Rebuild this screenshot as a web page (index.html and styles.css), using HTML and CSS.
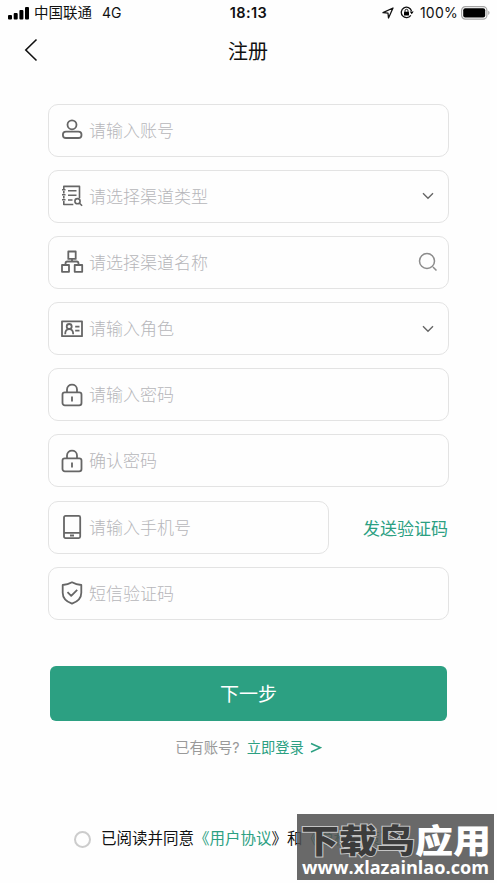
FILE: index.html
```html
<!DOCTYPE html>
<html lang="zh-CN">
<head>
<meta charset="utf-8">
<title>注册</title>
<link rel="stylesheet" href="styles.css">
</head>
<body>
<div class="status">
  <div class="status-left">
    <svg class="signal" width="22" height="14" viewBox="0 0 22 14"><rect x="0" y="9" width="4" height="4.500" rx="1"/><rect x="5.700" y="7" width="4" height="6.500" rx="1"/><rect x="11.400" y="4" width="4" height="9.500" rx="1"/><rect x="17" y="1" width="4" height="12.500" rx="1"/></svg>
    <span class="carrier">中国联通</span><span class="net">4G</span>
  </div>
  <div class="time">18:13</div>
  <div class="status-right">
    <svg width="12" height="12" viewBox="0 0 12 12"><path d="M1 5.700 11 1 6.500 11 6 6.200Z" fill="none" stroke="#111" stroke-width="1.300" stroke-linejoin="round"/></svg>
    <svg class="rot" width="14" height="13" viewBox="0 0 14 13"><path d="M11.500 5A5.200 5.200 0 1 0 10.800 9.300" fill="none" stroke="#111" stroke-width="1.300"/><path d="M9.700 5.500h4l-2 2.700z"/><rect x="4" y="5.800" width="5" height="3.700" rx=".6"/><path d="M5 6V4.800a1.500 1.500 0 0 1 3 0V6" fill="none" stroke="#111"/></svg>
    <span class="pct">100%</span>
    <svg class="battery" width="29" height="14" viewBox="0 0 29 14"><rect x=".6" y=".6" width="25.300" height="12.500" rx="3.800" fill="#fff" stroke="#a5a5a5" stroke-width="1.200"/><rect x="2.200" y="2.200" width="22" height="9.300" rx="2"/><path d="M27.300 4.800c1.600.7 1.600 3.500 0 4.200z" fill="#999"/></svg>
  </div>
</div>
<header class="nav">
  <svg class="back" width="14" height="24" viewBox="0 0 14 24"><path d="M12.500 1.500 1.800 12 12.500 22.500"/></svg>
  <h1>注册</h1>
</header>
<main class="form">
  <div class="field">
    <svg class="icon" viewBox="0 0 24 24"><circle cx="12" cy="6.800" r="4.500"/><rect x="2.900" y="13.700" width="18.600" height="6.300" rx="3.100"/></svg>
    <span class="hint">请输入账号</span>
  </div>
  <div class="field">
    <svg class="icon fine" viewBox="0 0 24 24"><path d="M3.800 5V2.400h15.700V14M3.800 7v2.500M3.800 12v2.500M3.800 17v3.500h9.500M2 5.700h3.500M2 10.700h3.500M2 15.700h3.500M8 6.800h8.500M8 11.300h8.500M8 16h4.500"/><circle cx="17.500" cy="17.200" r="2.600"/><path d="m19.500 19.200 2.600 2.600"/></svg>
    <span class="hint">请选择渠道类型</span>
    <svg class="arrow" viewBox="0 0 12 8"><path d="m1 1.200 5 5 5-5"/></svg>
  </div>
  <div class="field">
    <svg class="icon" viewBox="0 0 24 24"><path d="M8.300 1.500h7.400v7.400H8.300zM2 15h7v6.800H2zM14.700 15h7.500v6.800h-7.500zM12 9v2.500M5.500 15v-1.500q0-2 2-2h9q2 0 2 2V15"/></svg>
    <span class="hint">请选择渠道名称</span>
    <svg class="search" viewBox="0 0 20 20"><circle cx="9" cy="9" r="7.500"/><path d="m15 15 3.500 3.500"/></svg>
  </div>
  <div class="field">
    <svg class="icon" viewBox="0 0 24 24"><path d="M2 4.300h20v14.900H2zM15.200 9.600h4.300M15.200 13.600h4.300"/><circle cx="9.200" cy="9.500" r="2.500"/><path d="M5.200 17.300c0-6.800 8-6.800 8 0"/></svg>
    <span class="hint">请输入角色</span>
    <svg class="arrow" viewBox="0 0 12 8"><path d="m1 1.200 5 5 5-5"/></svg>
  </div>
  <div class="field">
    <svg class="icon" viewBox="0 0 24 24"><rect x="2.500" y="9.300" width="19" height="13" rx="2.300"/><path d="M7 9V6.500c0-6.500 10-6.500 10 0V9M12 13.500v5"/></svg>
    <span class="hint">请输入密码</span>
  </div>
  <div class="field">
    <svg class="icon" viewBox="0 0 24 24"><rect x="2.500" y="9.300" width="19" height="13" rx="2.300"/><path d="M7 9V6.500c0-6.500 10-6.500 10 0V9M12 13.500v5"/></svg>
    <span class="hint">确认密码</span>
  </div>
  <div class="row">
    <div class="field phone">
      <svg class="icon" viewBox="0 0 24 24"><rect x="4" y=".9" width="16.200" height="22.200" rx="1.500"/><path d="M4 17.800h16.200M10 20.500h4"/></svg>
      <span class="hint">请输入手机号</span>
    </div>
    <a class="send">发送验证码</a>
  </div>
  <div class="field">
    <svg class="icon" viewBox="0 0 24 24"><path d="M12 1.300C9 3.100 6 3.900 2.700 4V11.700c0 5.500 4 9 9.300 11 5.300-2 9.300-5.500 9.300-11V4C18 3.900 15 3.100 12 1.300ZM7.500 11.200l3.700 3.700 6-6"/></svg>
    <span class="hint">短信验证码</span>
  </div>
  <div class="next">下一步</div>
  <p class="login">已有账号?<a>立即登录</a><svg width="12" height="12" viewBox="0 0 12 12"><path d="m1 1.500 9.500 4.200L1 10"/></svg></p>
</main>
<footer class="agree"><i class="radio"></i><span>已阅读并同意<a>《用户协议</a>》和<a>《隐私政策》</a></span></footer>
<svg class="mark" width="197" height="66" viewBox="0 0 197 66">
  <rect width="197" height="66" fill="#505050" fill-opacity=".86"/>
  <text class="brand dark" x="4" y="38.500" textLength="114" lengthAdjust="spacingAndGlyphs">下载鸟</text>
  <text class="brand" x="118" y="38.500" textLength="76" lengthAdjust="spacingAndGlyphs">应用</text>
  <text class="url" x="5" y="60" textLength="187" lengthAdjust="spacingAndGlyphs">www.xlazainlao.com</text>
</svg>
</body>
</html>
```
FILE: styles.css
```css
* { box-sizing: border-box; }
body {
  margin: 0;
  width: 497px;
  height: 883px;
  overflow: hidden;
  position: relative;
  background: #fefefe;
  color: #111;
  font-family: Inter, "Noto Sans CJK SC", sans-serif;
}
.status {
  height: 25px;
  padding: 0 7px 0 8px;
  display: grid;
  grid-template-columns: 1fr auto 1fr;
  align-items: center;
  font-size: 14px;
  line-height: 25px;
}
.status-left, .status-right { display: flex; align-items: center; }
.status-right { justify-content: flex-end; }
.signal { margin-right: 4px; }
.carrier { font-size: 14.500px; }
.net { margin-left: 10px; }
.time { font-weight: 600; font-size: 14.500px; letter-spacing: .4px; margin-right: 1px; }
.rot { margin: 0 6px 0 6px; }
.pct { letter-spacing: .25px; }
.battery { margin-left: 3px; }
.nav {
  height: 50px;
  padding: 0 24px;
  display: grid;
  grid-template-columns: 14px 1fr 14px;
  align-items: center;
}
.nav h1 {
  margin: 0 1px 0 0;
  text-align: center;
  font-size: 20px;
  font-weight: 400;
}
.back path { fill: none; stroke: #111; stroke-width: 1.600; }
.form {
  margin: 28.500px 48px 0;
  display: flex;
  flex-direction: column;
  gap: 13.200px;
}
.field {
  height: 53px;
  padding: 0 11px;
  display: flex;
  align-items: center;
  border: 1px solid #e3e3e3;
  border-radius: 10px;
}
.icon {
  width: 24px;
  height: 24px;
  margin-right: 5px;
  fill: none;
  stroke: #666;
  stroke-width: 1.800;
  stroke-linejoin: round;
}
.icon.fine { stroke-width: 1.600; }
.hint {
  flex: 1;
  padding-top: 1px;
  color: #b6b6ba;
  font-size: 17px;
  font-weight: 300;
  line-height: 24px;
}
.arrow {
  width: 12px;
  height: 8px;
  margin-right: 3px;
  fill: none;
  stroke: #666;
  stroke-width: 1.400;
}
.search {
  width: 20px;
  height: 20px;
  margin-right: -1px;
  fill: none;
  stroke: #8c8c8c;
  stroke-width: 1.500;
}
.row { display: flex; align-items: center; justify-content: space-between; }
.phone { width: 281px; }
.send { margin-right: 1px; font-size: 17px; color: #2ca082; }
.next {
  height: 55.500px;
  margin: 32.500px 2px 0;
  padding-top: 1px;
  border-radius: 6px;
  background: #2ca082;
  color: #fff;
  font-size: 19px;
  font-weight: 400;
  line-height: 56px;
  text-align: center;
}
.login {
  margin: 2.500px 0 0;
  display: flex;
  align-items: center;
  justify-content: center;
  font-size: 14.300px;
  line-height: 22px;
  color: #999;
}
.login a { margin: 0 6px 0 7px; color: #2ca082; }
.login path { fill: none; stroke: #2ca082; stroke-width: 1.500; }
.agree {
  margin: 68.500px 0 0 74px;
  display: flex;
  align-items: center;
  font-size: 15.500px;
  line-height: 24px;
  white-space: nowrap;
}
.agree a { color: #2ca082; }
.radio {
  width: 17px;
  height: 17px;
  margin-right: 10px;
  border: 2px solid #ccc;
  border-radius: 50%;
}
.mark { position: absolute; left: 297px; top: 814px; }
.brand {
  font: 900 33px "Noto Sans CJK SC", sans-serif;
  fill: #fff;
}
.dark {
  fill: #3c3c3c;
  stroke: #c4c4c4;
  stroke-width: 2px;
  paint-order: stroke;
}
.url { font: 700 18px "Open Sans", sans-serif; fill: #fff; }
```
